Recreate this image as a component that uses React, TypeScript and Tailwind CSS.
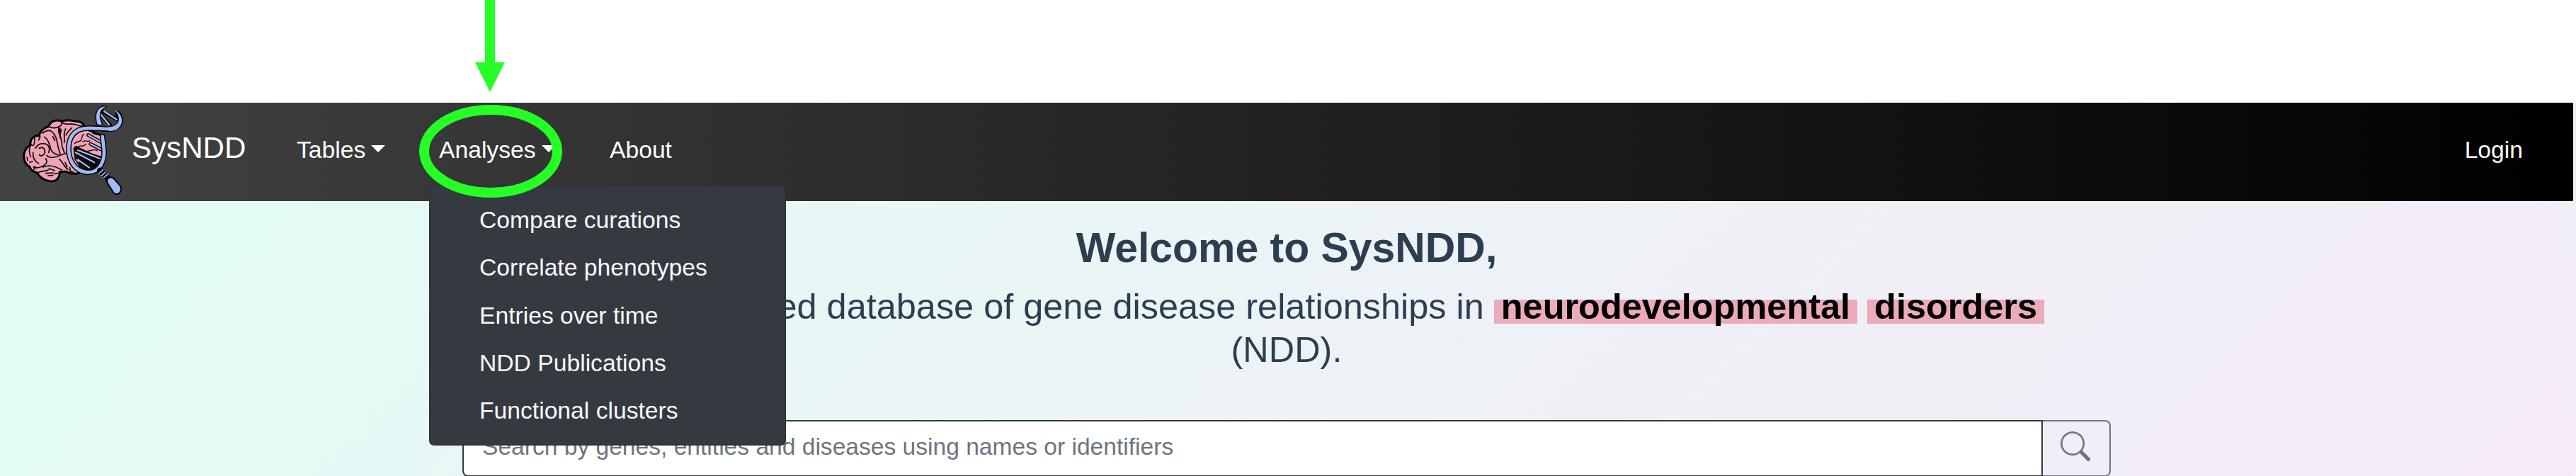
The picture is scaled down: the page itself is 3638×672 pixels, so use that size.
import React from "react";

const analyses = [
  "Compare curations",
  "Correlate phenotypes",
  "Entries over time",
  "NDD Publications",
  "Functional clusters",
];

function Logo() {
  return (
    <svg className="mb-[6px] h-[132px] w-[147px] shrink-0" viewBox="90 50 441 396" fill="none" strokeLinecap="round" strokeLinejoin="round">
      {/* brain */}
      <path
        d="M166 190C166 172 182 154 206 148C212 126 236 116 262 126C286 116 308 122 322 126C346 126 360 140 358 156L440 190L436 290L400 330L322 348C312 352 298 346 276 338L252 340C256 362 240 382 214 380C190 378 166 362 158 344C138 338 130 332 126 318C108 310 98 288 102 264C104 248 116 232 130 226C124 206 140 186 166 186Z"
        fill="#f0a3b3"
        stroke="#000"
        strokeWidth="9"
      />
      <g stroke="#0b0809" strokeWidth="5">
        <path d="M206 148C222 156 242 154 256 146C266 138 262 130 258 126M262 132C280 144 300 132 322 140C338 146 348 146 356 148" />
        <path d="M180 176C196 164 206 162 218 168C236 182 240 202 244 222C246 240 252 252 256 268M188 192C206 204 212 226 216 246C220 258 232 264 246 268" />
        <path d="M254 160C250 184 262 202 262 222C262 238 270 246 272 258M278 158C266 178 276 196 272 216M304 154C292 166 284 172 280 184" />
        <path d="M132 226C146 236 148 212 146 194M130 226C120 246 124 262 130 276M150 240C160 222 178 216 194 222C210 228 212 244 206 258M166 240C182 232 192 242 190 258C188 270 174 276 166 268M140 258C138 280 148 296 164 304" />
        <path d="M198 270C208 284 226 280 244 274C258 268 270 264 284 260M194 284C204 300 194 308 180 316C166 322 152 326 142 320M182 320C208 306 238 318 262 332M252 286C266 300 272 318 288 330M296 322L298 338M276 300L284 318" />
        <path d="M164 342C184 332 196 340 206 330M208 326L232 334M194 346L226 344M204 356L224 354M232 348L246 346M114 278L118 292M126 300L138 296M148 316L144 330M224 190L232 208M164 206L170 190" />
      </g>
      <path d="M246 148L262 160L254 202C252 186 244 172 246 158Z" fill="#1c1416" />
      <path d="M302 334L320 344L306 350L292 344Z" fill="#1c1416" />
      {/* lens contents */}
      <path d="M310 238L342 248L436 276L438 296L402 328L372 334L338 322L316 288Z" fill="#171216" />
      <g stroke="#0b0809" strokeWidth="4">
        <path d="M316 220C326 208 338 216 344 204C350 196 344 184 356 180M324 236C340 222 352 240 364 222M350 212C362 202 372 216 380 208M370 252C390 250 400 242 412 250M394 178L414 182" />
      </g>
      <g stroke="#000" strokeWidth="15">
        <path d="M374 184L428 214M384 222L430 246M322 238L424 286M320 258L404 302M334 284L376 322M404 318L352 272" />
      </g>
      <path d="M322 284L332 290L336 300L326 296ZM356 304L366 308L362 312Z" fill="#f0a3b3" />
      <g stroke="#a0bbf8" strokeWidth="7">
        <path d="M374 184L428 214M384 222L430 246M330 248L424 284M320 258L400 300M330 288L378 322" />
      </g>
      {/* helix and rim */}
      <path
        d="M500 94C514 110 514 138 494 150C470 168 440 154 408 156C350 150 308 160 294 212C282 272 306 338 372 342C428 342 446 286 440 238L434 190"
        stroke="#000"
        strokeWidth="23"
      />
      <path d="M438 86L500 120M426 98L466 140" stroke="#000" strokeWidth="16" />
      <path d="M442 84L494 118M428 98L462 140" stroke="#a0bbf8" strokeWidth="7" />
      <path d="M410 138C402 104 406 76 428 65C438 60 448 60 450 66C432 72 424 84 424 104C424 118 432 130 434 140C426 144 414 142 410 138Z" fill="#a0bbf8" stroke="#000" strokeWidth="4" />
      <path
        d="M494 150C474 166 440 154 408 156C350 150 308 160 294 212C282 272 306 338 372 342C428 342 446 286 440 238L434 190"
        stroke="#a0bbf8"
        strokeWidth="14"
      />
      <path d="M488 80C516 92 526 128 506 150C496 164 476 168 462 166L460 150C484 150 502 138 504 118C504 100 496 92 488 80Z" fill="#a0bbf8" />
      {/* handle */}
      <path d="M424 334L456 366" stroke="#000" strokeWidth="24" />
      <path d="M420 346L436 332M430 356L446 342M440 364L456 350" stroke="#a0bbf8" strokeWidth="5" />
      <path d="M454 372C460 362 472 360 482 368L510 400C518 416 510 432 496 434C486 436 480 428 476 420L456 388C452 382 452 378 454 372Z" fill="#a0bbf8" stroke="#000" strokeWidth="6" />
    </svg>
  );
}

function Caret() {
  return <span className="mb-[6px] ml-[8px] h-0 w-0 border-x-[10px] border-t-[10px] border-x-transparent border-t-white" />;
}

function Highlight({ children }: { children: React.ReactNode }) {
  return (
    <mark className="bg-[linear-gradient(transparent_33%,#ebabb9_33%,#ebabb9_92.5%,transparent_92.5%)] bg-transparent px-[10px] font-bold text-black">
      {children}
    </mark>
  );
}

function AnalysesMenu() {
  return (
    <ul className="absolute left-[606px] top-[261px] z-10 flex h-[368px] w-[504px] flex-col rounded-[7px] border-2 border-[#2f3338] bg-[#353a41] pl-[69px] pt-[14px] text-[33.67px] leading-[67.3px] text-[#f8f9fa]">
      {analyses.map((item) => (
        <li key={item} className="h-[67.3px] shrink-0 whitespace-nowrap">
          {item}
        </li>
      ))}
    </ul>
  );
}

function Pointer() {
  return (
    <svg className="absolute left-[580px] top-0 z-20 h-[300px] w-[230px]" viewBox="580 0 230 300">
      <path d="M685 0H699V88H713L692 130L671 88H685Z" fill="#25ff25" />
      <ellipse cx="693" cy="213.5" rx="94" ry="58.5" fill="none" stroke="#25ff25" strokeWidth="14" />
    </svg>
  );
}

export default function App() {
  return (
    <div className="relative flex h-[672px] w-[3638px] flex-col overflow-hidden bg-white pt-[145px] font-['Liberation_Sans',Arial,sans-serif]">
      <div className="flex flex-1 bg-[#f0f0f0]">
        <div className="flex w-[3634px] flex-col bg-[linear-gradient(135deg,#e0fff5_0%,#e6f8f5_25%,#ecf3f6_50%,#f1eef6_75%,#f3edf9_92%,#f7e9f8_100%)]">
          <nav className="flex h-[139px] shrink-0 items-center bg-[linear-gradient(to_right,#434343,#000)] pl-[30px] pr-[71px] text-[33.67px] text-white">
            <Logo />
            <span className="ml-[9px] w-[233px] pb-[11px] text-[42.1px]">SysNDD</span>
            <a className="flex w-[201px] items-center pb-[4px]">
              Tables
              <Caret />
            </a>
            <a className="flex w-[241px] items-center pb-[4px]">
              Analyses
              <Caret />
            </a>
            <a className="pb-[4px]">About</a>
            <a className="ml-auto pb-[4px]">Login</a>
          </nav>
          <main className="flex flex-col items-center border-t-2 border-white/60 text-[#2c3e50]">
            <h1 className="mt-[29px] text-[58.9px] font-bold leading-[70px]">Welcome to SysNDD,</h1>
            <p className="mt-[18px] w-[2200px] text-center text-[50.45px] leading-[60.6px]">
              the expert curated database of gene disease relationships in <Highlight>neurodevelopmental</Highlight>{" "}
              <Highlight>disorders</Highlight> (NDD).
            </p>
            <form className="mt-[69px] flex h-[80px] w-[2328px] text-[33.6px]">
              <div className="flex flex-1 items-center rounded-l-[8px] border-2 border-[#343a40] bg-white pb-[3px] pl-[26px] text-[#6c757d]">
                Search by genes, entities and diseases using names or identifiers
              </div>
              <button type="button" className="flex w-[96px] rounded-r-[8px] border-2 border-l-0 border-[#6c757d] pl-[25px] pt-[14px]">
                <svg className="h-[42px] w-[42px]" viewBox="0 0 16 16" fill="#6c757d">
                  <path d="M11.742 10.344a6.5 6.5 0 1 0-1.397 1.398h-.001c.03.04.062.078.098.115l3.85 3.85a1 1 0 0 0 1.415-1.414l-3.85-3.85a1.007 1.007 0 0 0-.115-.1zM12 6.5a5.5 5.5 0 1 1-11 0 5.5 5.5 0 0 1 11 0z" />
                </svg>
              </button>
            </form>
          </main>
        </div>
      </div>
      <AnalysesMenu />
      <Pointer />
    </div>
  );
}
